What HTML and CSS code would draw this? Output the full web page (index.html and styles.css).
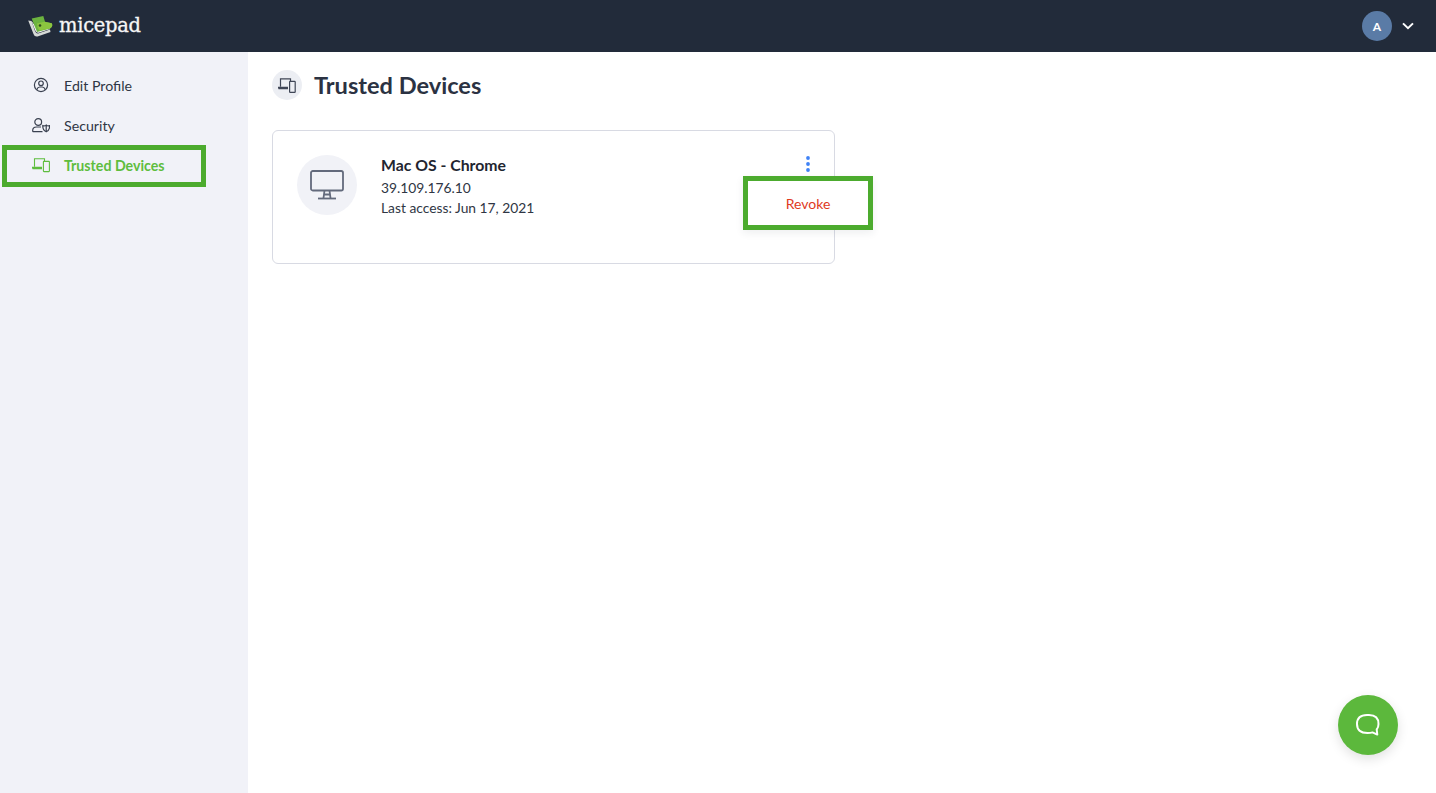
FILE: index.html
```html
<!DOCTYPE html>
<html lang="en">
<head>
<meta charset="utf-8">
<title>Trusted Devices</title>
<link rel="stylesheet" href="styles.css">
</head>
<body>
<header class="topbar">
  <div class="brand">
    <svg class="brand-logo" width="26" height="24" viewBox="0 0 26 24">
      <path d="M1.2 6.5 L6.5 20 Q7.5 23 10.5 22.5 L23.5 18 L23 15.5 L11 19.5 Q9 19.5 8 17 L4.5 7 Z" fill="#d6d9d6"/>
      <path d="M4.5 7 L8.5 17 Q9.5 19 11.5 18.7 L23 15 L21 12 L10 14 Z" fill="#f4f5f3"/>
      <path d="M4.7 4.4 L16.3 2 L18 7.7 L24.7 9.3 Q26 11 24.7 13 L23 14.6 L10 18 Q9 15 8 13 Z" fill="#6cb33f"/>
      <path d="M10 9.5 L17.5 7.7 L24.7 9.3 Q26 11 24.7 13 L23 14.6 L12.5 16.5 Q10 14 10 9.5 Z" fill="#8cc63f"/>
      <circle cx="13" cy="11.5" r="1.3" fill="#2f4a1f"/>
    </svg>
    <span class="brand-name">micepad</span>
  </div>
  <div class="account">
    <span class="avatar">A</span>
    <svg width="12" height="8" viewBox="0 0 12 8"><path d="M1 1.4 L6 6.2 L11 1.4" fill="none" stroke="#fff" stroke-width="2"/></svg>
  </div>
</header>
<div class="shell">
  <aside class="sidebar">
    <nav class="nav">
      <a class="nav-item">
        <svg class="nav-icon" width="18" height="18" viewBox="0 0 18 18" fill="none" stroke="currentColor" stroke-width="1.2"><circle cx="9" cy="9" r="6.6"/><circle cx="9" cy="7.3" r="2.3"/><path d="M4.7 13.8 Q5.4 11.2 7.6 11 H10.4 Q12.6 11.2 13.3 13.8"/></svg>
        <span>Edit Profile</span>
      </a>
      <a class="nav-item">
        <svg class="nav-icon" width="18" height="18" viewBox="0 0 18 18" fill="none" stroke="currentColor" stroke-width="1.2"><circle cx="6.2" cy="6" r="3.4"/><path d="M0.7 15.7 V14.4 Q0.7 11.2 4.5 11 H9 M0.7 15.7 H10.5"/><path d="M10.8 9.6 Q13.4 10.2 14.2 9 Q15 10.2 17.6 9.6 Q17.9 14.2 14.2 15.8 Q10.5 14.2 10.8 9.6 Z M14.2 9.4 V15.6"/></svg>
        <span>Security</span>
      </a>
      <a class="nav-item nav-item-active">
        <svg class="nav-icon" width="18" height="18" viewBox="0 0 18 18" fill="none" stroke="currentColor" stroke-width="1.1"><path d="M2.5 10.8 V2.7 H12.5 V5"/><path d="M0.5 12.6 H10 M0.5 12.6 V11.4 H10"/><rect x="11.4" y="5.4" width="6" height="10.2" rx="0.6"/></svg>
        <span>Trusted Devices</span>
      </a>
    </nav>
    <div class="annotation annotation-nav"></div>
  </aside>
  <main class="content">
    <div class="page-head">
      <span class="page-icon">
        <svg width="18" height="18" viewBox="0 0 18 18" fill="none" stroke="#3f4656" stroke-width="1.2"><path d="M2.5 10.8 V2.9 H12.5 V5"/><path d="M0.5 12.6 H10 M0.5 12.6 V11.4 H10"/><rect x="11.6" y="5.4" width="5.6" height="11" rx="0.6"/></svg>
      </span>
      <h1 class="page-title">Trusted Devices</h1>
    </div>
    <section class="device-card">
      <span class="device-icon">
        <svg width="36" height="32" viewBox="0 0 36 32" fill="none" stroke="#636a7c" stroke-width="1.8"><rect x="2" y="2" width="32" height="19.5" rx="1.8"/><path d="M15.5 21.5 L14.5 29 M20.5 21.5 L21.5 29 M15 25.5 H21"/><path d="M9 29.5 H27"/></svg>
      </span>
      <div class="device-info">
        <div class="device-name">Mac OS - Chrome</div>
        <div class="device-line">39.109.176.10</div>
        <div class="device-line">Last access: Jun 17, 2021</div>
      </div>
      <div class="device-actions">
        <svg class="kebab" width="4" height="16" viewBox="0 0 4 16" fill="#3f82f6"><circle cx="2" cy="2" r="1.9"/><circle cx="2" cy="8" r="1.9"/><circle cx="2" cy="14" r="1.9"/></svg>
        <div class="menu"><a class="menu-item">Revoke</a></div>
      </div>
    </section>
  </main>
</div>
<button class="chat-button" aria-label="Chat">
  <svg width="28" height="26" viewBox="0 0 28 26" fill="none" stroke="#fff" stroke-width="2"><path d="M13 3 H15 Q24.5 3 24.5 12 Q24.5 15.5 22.7 17.5 L23.3 22.6 L18.5 20.4 Q16.5 21 13.5 21 Q3 21 3 12 Q3 3 13 3 Z" stroke-linejoin="round"/></svg>
</button>
</body>
</html>
```

FILE: styles.css
```css
* { box-sizing: border-box; }
html, body { height: 100%; }
body {
  margin: 0;
  overflow: hidden;
  display: flex;
  flex-direction: column;
  font-family: Lato, "Liberation Sans", sans-serif;
  color: #2b3242;
  background: #fff;
}
.topbar {
  height: 52px;
  flex: none;
  background: #222b3a;
  display: flex;
  align-items: center;
  justify-content: space-between;
  padding: 0 22px 0 27px;
}
.brand { display: flex; align-items: center; gap: 6px; }
.brand-name {
  font-family: "DejaVu Serif", "Liberation Serif", serif;
  font-size: 19.5px;
  letter-spacing: -0.3px;
  color: #f6f6f6;
  padding-bottom: 2px;
  -webkit-text-stroke: 0.3px #f6f6f6;
}
.account { display: flex; align-items: center; gap: 10px; }
.avatar {
  width: 30px;
  height: 30px;
  border-radius: 50%;
  background: #5a7ba6;
  color: #fff;
  font-size: 12px;
  font-weight: 700;
  display: flex;
  align-items: center;
  justify-content: center;
}
.shell { flex: 1; display: flex; min-height: 0; }
.sidebar {
  width: 248px;
  flex: none;
  background: #f1f2f8;
  padding-top: 14px;
  position: relative;
}
.nav { display: flex; flex-direction: column; }
.nav-item {
  height: 40px;
  display: flex;
  align-items: center;
  gap: 14px;
  padding: 0 0 2px 32px;
  font-size: 14.2px;
  color: #2f3644;
}
.nav-icon { flex: none; color: #3a4150; }
.nav-item-active { color: #5ebd3e; font-weight: 700; }
.nav-item-active .nav-icon { color: #5ebd3e; }
.annotation-nav {
  position: absolute;
  left: 2px;
  top: 93px;
  width: 204px;
  height: 42px;
  border: 5px solid #4cab2e;
}
.content { flex: 1; padding: 18px 24px; min-width: 0; }
.page-head { display: flex; align-items: center; gap: 12px; height: 30px; }
.page-icon {
  width: 30px;
  height: 30px;
  border-radius: 50%;
  background: #eceef3;
  display: flex;
  align-items: center;
  justify-content: center;
}
.page-title { margin: 0; font-size: 23.6px; font-weight: 700; color: #2b3242; }
.device-card {
  margin-top: 30px;
  width: 563px;
  height: 134px;
  border: 1px solid #d8dae3;
  border-radius: 6px;
  padding: 24px;
  display: flex;
  gap: 24px;
  position: relative;
}
.device-icon {
  width: 60px;
  height: 60px;
  flex: none;
  border-radius: 50%;
  background: #f1f2f7;
  display: flex;
  align-items: center;
  justify-content: center;
}
.device-name { font-size: 15.8px; font-weight: 700; color: #1f2530; line-height: 20px; }
.device-line { font-size: 13.8px; line-height: 20px; color: #2f3644; }
.device-name + .device-line { margin-top: 3px; }
.device-actions { position: absolute; left: 470px; top: 25px; width: 130px; }
.kebab { display: block; margin: 0 auto; }
.menu {
  position: absolute;
  top: 20px;
  left: 0;
  width: 130px;
  height: 54px;
  border: 5px solid #4cab2e;
  background: #fff;
  box-shadow: 0 3px 8px rgba(40, 45, 60, 0.08);
  display: flex;
  align-items: center;
  justify-content: center;
}
.menu-item { font-size: 14px; color: #e03a1e; }
.chat-button {
  position: fixed;
  right: 38px;
  bottom: 38px;
  width: 60px;
  height: 60px;
  padding: 0;
  border: 0;
  border-radius: 50%;
  background: #5cb83c;
  box-shadow: 0 4px 12px rgba(0, 0, 0, 0.12);
  display: flex;
  align-items: center;
  justify-content: center;
}
```
